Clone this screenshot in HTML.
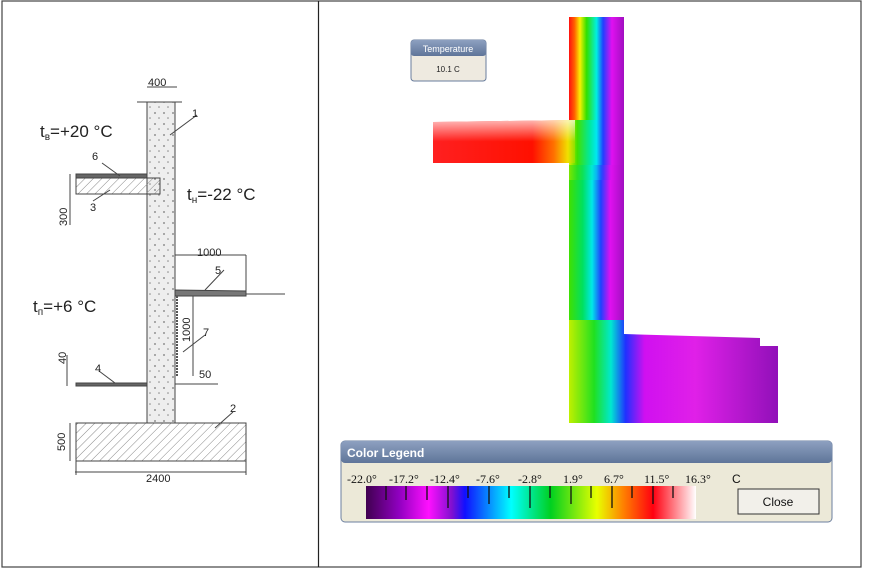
<!DOCTYPE html>
<html><head><meta charset="utf-8"><style>
html,body{margin:0;padding:0;background:#fff;}
body{width:869px;height:575px;position:relative;overflow:hidden;font-family:"Liberation Sans",sans-serif;}
</style></head><body>
<svg width="869" height="575" viewBox="0 0 869 575" xmlns="http://www.w3.org/2000/svg" style="position:absolute;left:0;top:0">
<defs>
<linearGradient id="gTop" x1="0" x2="1" y1="0" y2="0">
<stop offset="0" stop-color="#ff1010"/><stop offset="0.1" stop-color="#ff6000"/><stop offset="0.2" stop-color="#f8f000"/><stop offset="0.32" stop-color="#30e000"/><stop offset="0.5" stop-color="#00f0e0"/><stop offset="0.62" stop-color="#2040ff"/><stop offset="0.78" stop-color="#e010f0"/><stop offset="1" stop-color="#a010c0"/></linearGradient>
<linearGradient id="gJoin" x1="0" x2="1" y1="0" y2="0">
<stop offset="0" stop-color="#d8f000"/><stop offset="0.15" stop-color="#40e000"/><stop offset="0.38" stop-color="#00e8a0"/><stop offset="0.5" stop-color="#00e8f0"/><stop offset="0.62" stop-color="#2040ff"/><stop offset="0.78" stop-color="#e010f0"/><stop offset="1" stop-color="#a010c0"/></linearGradient>
<linearGradient id="gMid" x1="0" x2="1" y1="0" y2="0">
<stop offset="0" stop-color="#40e000"/><stop offset="0.25" stop-color="#00e060"/><stop offset="0.42" stop-color="#00e8e8"/><stop offset="0.58" stop-color="#2040ff"/><stop offset="0.75" stop-color="#e010f0"/><stop offset="1" stop-color="#a010c0"/></linearGradient>
<linearGradient id="gBot" x1="569" x2="779" y1="0" y2="0" gradientUnits="userSpaceOnUse">
<stop offset="0" stop-color="#c0f000"/><stop offset="0.12" stop-color="#20e020"/><stop offset="0.2" stop-color="#00e8d0"/><stop offset="0.27" stop-color="#2030ff"/><stop offset="0.36" stop-color="#d010f0"/><stop offset="0.6" stop-color="#e020e8"/><stop offset="1" stop-color="#9010b8"/></linearGradient>
<linearGradient id="gSlab" x1="0" x2="1" y1="0" y2="0">
<stop offset="0" stop-color="#ff2020"/><stop offset="0.7" stop-color="#ff1000"/><stop offset="0.85" stop-color="#ff7000"/><stop offset="0.95" stop-color="#f0e000"/><stop offset="1" stop-color="#90e000"/></linearGradient>
<linearGradient id="gSlabV" x1="0" x2="0" y1="0" y2="1">
<stop offset="0" stop-color="#fff" stop-opacity="0.7"/><stop offset="0.5" stop-color="#fff" stop-opacity="0"/></linearGradient>
<linearGradient id="gLeg" x1="0" x2="1" y1="0" y2="0">
<stop offset="0" stop-color="#400050"/><stop offset="0.1" stop-color="#9000c0"/><stop offset="0.19" stop-color="#ff10ff"/><stop offset="0.26" stop-color="#8010d0"/><stop offset="0.3" stop-color="#1010ff"/><stop offset="0.44" stop-color="#00ffff"/><stop offset="0.56" stop-color="#00d020"/><stop offset="0.7" stop-color="#e8ff00"/><stop offset="0.78" stop-color="#ff8000"/><stop offset="0.87" stop-color="#ff0010"/><stop offset="1" stop-color="#ffffff"/></linearGradient>
<linearGradient id="gTitle" x1="0" x2="0" y1="0" y2="1"><stop offset="0" stop-color="#8da0c0"/><stop offset="1" stop-color="#5f7599"/></linearGradient>
<linearGradient id="fadeT" x1="0" x2="0" y1="0" y2="1"><stop offset="0" stop-color="#fff" stop-opacity="1"/><stop offset="1" stop-color="#fff" stop-opacity="0"/></linearGradient>
<pattern id="hatch" width="6" height="6" patternUnits="userSpaceOnUse" patternTransform="rotate(45)"><line x1="0" y1="0" x2="0" y2="6" stroke="#888" stroke-width="1"/></pattern>
<pattern id="dots" width="9" height="11" patternUnits="userSpaceOnUse"><rect width="9" height="11" fill="#eeeeee"/><circle cx="2" cy="3" r="0.9" fill="#777"/><circle cx="6" cy="8" r="0.8" fill="#888"/></pattern>
</defs>
<rect x="2" y="1" width="859" height="566" fill="none" stroke="#444" stroke-width="1.2"/>
<line x1="318.5" y1="1" x2="318.5" y2="567" stroke="#222" stroke-width="1.2"/>

<g stroke="#444" fill="none" stroke-width="1">
<rect x="147" y="102" width="28" height="321" fill="url(#dots)"/>
<rect x="76" y="423" width="170" height="38" fill="url(#hatch)"/>
<rect x="76" y="178" width="84" height="16" fill="url(#hatch)"/>
<rect x="76" y="174" width="71" height="4" fill="#666"/>
<rect x="76" y="383" width="71" height="3" fill="#666"/>
<path d="M175 290 L246 291 L246 296 L175 296 Z" fill="#777"/>
<line x1="246" y1="294" x2="285" y2="294"/>
<line x1="177" y1="296" x2="177" y2="376" stroke-dasharray="2 1" stroke="#555" stroke-width="2"/>
<line x1="137" y1="102" x2="182" y2="102"/>
<line x1="147" y1="87" x2="177" y2="87"/>
<line x1="175" y1="255" x2="246" y2="255"/><line x1="246" y1="255" x2="246" y2="291"/>
<line x1="193" y1="296" x2="193" y2="376"/>
<line x1="175" y1="384" x2="218" y2="384"/>
<line x1="75" y1="472" x2="246" y2="472"/>
<line x1="76" y1="461" x2="76" y2="475"/><line x1="246" y1="461" x2="246" y2="475"/>
<line x1="70" y1="174" x2="70" y2="225"/><line x1="70" y1="423" x2="70" y2="461"/>
<line x1="67" y1="355" x2="67" y2="386"/>
<line x1="197" y1="115" x2="170" y2="135"/>
<line x1="102" y1="163" x2="120" y2="176"/>
<line x1="93" y1="201" x2="110" y2="190"/>
<line x1="224" y1="270" x2="205" y2="290"/>
<line x1="205" y1="335" x2="183" y2="352"/>
<line x1="99" y1="371" x2="115" y2="383"/>
<line x1="233" y1="412" x2="215" y2="428"/>
</g>
<g font-family="Liberation Sans" fill="#222">
<text x="148" y="86" font-size="11">400</text>
<text x="192" y="117" font-size="11">1</text>
<text x="40" y="137" font-size="17">t<tspan font-size="10" dy="3">в</tspan><tspan dy="-3">=+20 °C</tspan></text>
<text x="92" y="160" font-size="11">6</text>
<text x="90" y="211" font-size="11">3</text>
<text x="187" y="200" font-size="17">t<tspan font-size="10" dy="3">н</tspan><tspan dy="-3">=-22 °C</tspan></text>
<text x="197" y="256" font-size="11">1000</text>
<text x="215" y="274" font-size="11">5</text>
<text x="33" y="312" font-size="17">t<tspan font-size="10" dy="3">п</tspan><tspan dy="-3">=+6 °C</tspan></text>
<text x="203" y="336" font-size="11">7</text>
<text x="199" y="378" font-size="11">50</text>
<text x="95" y="372" font-size="11">4</text>
<text x="230" y="412" font-size="11">2</text>
<text x="146" y="482" font-size="11">2400</text>
<text transform="translate(67,226) rotate(-90)" font-size="11">300</text>
<text transform="translate(66,364) rotate(-90)" font-size="11">40</text>
<text transform="translate(65,451) rotate(-90)" font-size="11">500</text>
<text transform="translate(190,342) rotate(-90)" font-size="11">1000</text>
</g>

<rect x="569" y="17" width="55" height="110" fill="url(#gTop)"/>
<rect x="569" y="125" width="55" height="200" fill="url(#gMid)"/>
<rect x="569" y="120" width="55" height="60" fill="url(#gJoin)"/>
<rect x="569" y="165" width="55" height="40" fill="url(#gMid)" opacity="0.6"/>
<path d="M433 122 L575 120 L575 163 L433 163 Z" fill="url(#gSlab)"/>
<path d="M433 122 L575 120 L575 163 L433 163 Z" fill="url(#gSlabV)"/>
<path d="M569 320 L624 320 L624 334 L760 338 L760 346 L778 346 L778 423 L569 423 Z" fill="url(#gBot)"/>

<rect x="411" y="40" width="75" height="41" rx="3" fill="#eeeae0" stroke="#6a7e9e"/>
<rect x="411" y="40" width="75" height="16" rx="3" fill="url(#gTitle)"/>
<text x="448" y="52" font-size="9" fill="#fff" text-anchor="middle">Temperature</text>
<text x="448" y="72" font-size="8" fill="#222" text-anchor="middle">10.1 C</text>

<rect x="341" y="441" width="491" height="81" rx="4" fill="#ece9d8" stroke="#6b7f9f"/>
<rect x="341" y="441" width="491" height="22" rx="4" fill="url(#gTitle)"/>
<rect x="343" y="463" width="487" height="57" fill="#ece9d8"/>
<text x="347" y="457" font-size="12" font-weight="bold" fill="#fff">Color Legend</text>
<g font-family="Liberation Serif" font-size="12" fill="#111">
<text x="347" y="483">-22.0°</text><text x="389" y="483">-17.2°</text><text x="430" y="483">-12.4°</text>
<text x="476" y="483">-7.6°</text><text x="518" y="483">-2.8°</text><text x="563" y="483">1.9°</text>
<text x="604" y="483">6.7°</text><text x="644" y="483">11.5°</text><text x="685" y="483">16.3°</text>
<text x="732" y="483" font-family="Liberation Sans">C</text>
</g>
<rect x="366" y="486" width="330" height="33" fill="url(#gLeg)"/>
<g stroke="#111" stroke-width="1.3">
<line x1="386" y1="486" x2="386" y2="500"/><line x1="406" y1="486" x2="406" y2="500"/><line x1="427" y1="486" x2="427" y2="500"/>
<line x1="448" y1="486" x2="448" y2="508"/><line x1="468" y1="486" x2="468" y2="498"/><line x1="489" y1="486" x2="489" y2="504"/>
<line x1="509" y1="486" x2="509" y2="498"/><line x1="530" y1="486" x2="530" y2="508"/><line x1="550" y1="486" x2="550" y2="498"/>
<line x1="571" y1="486" x2="571" y2="504"/><line x1="591" y1="486" x2="591" y2="498"/><line x1="612" y1="486" x2="612" y2="508"/>
<line x1="632" y1="486" x2="632" y2="498"/><line x1="653" y1="486" x2="653" y2="504"/><line x1="673" y1="486" x2="673" y2="498"/>
</g>
<rect x="738" y="489" width="81" height="25" fill="#f2f0ea" stroke="#333"/>
<text x="778" y="506" font-size="12" fill="#111" text-anchor="middle">Close</text>
</svg>
</body></html>
